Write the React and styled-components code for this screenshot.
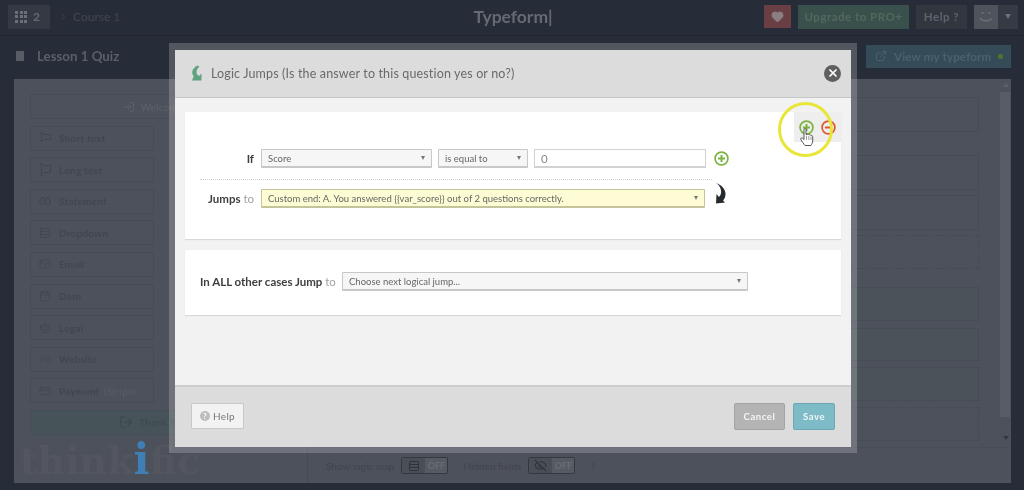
import React from "react";
import styled, { createGlobalStyle } from "styled-components";
import {
  ChevronRight,
  Heart,
  ExternalLink,
  Rows3,
  Mail,
  Calendar,
  Scale,
  Link2,
  CreditCard,
  LogOut,
  LogIn,
  EyeOff,
  X,
} from "lucide-react";

const GlobalStyle = createGlobalStyle`
  html, body {
    margin: 0;
    padding: 0;
    background: #262c38;
  }
  * {
    box-sizing: border-box;
  }
`;

const Page = styled.div`
  position: relative;
  width: 1024px;
  height: 490px;
  overflow: hidden;
  background: #262c38;
  font-family: Lato, "Liberation Sans", sans-serif;
  color: #5f636c;
  filter: blur(0.35px);
`;

const TopBar = styled.header`
  display: grid;
  grid-template-columns: 1fr auto 1fr;
  align-items: center;
  height: 36px;
  padding: 0 6px 2px 8px;
  border-bottom: 1px solid #22272f;
`;

const TopLeft = styled.div`
  display: flex;
  align-items: center;
`;

const AppsButton = styled.div`
  display: flex;
  align-items: center;
  gap: 6px;
  width: 42px;
  height: 24px;
  padding-left: 7px;
  background: #343944;
  color: #666a72;
  font-size: 12px;
  font-weight: 700;
`;

const Dots = styled.div`
  display: grid;
  grid-template-columns: repeat(3, 3px);
  gap: 1.5px;

  i {
    width: 3px;
    height: 3px;
    background: #6b6f77;
  }
`;

const Crumb = styled.span`
  display: flex;
  align-items: center;
  gap: 5px;
  margin-left: 9px;
  font-size: 12px;
  color: #424751;
`;

const Brand = styled.div`
  font-size: 17.5px;
  font-weight: 700;
  color: #656971;
`;

const TopRight = styled.div`
  display: flex;
  justify-content: flex-end;
  align-items: center;
  gap: 7px;
`;

const HeartButton = styled.div`
  display: flex;
  align-items: center;
  justify-content: center;
  width: 27px;
  height: 23px;
  background: #6a3f43;
  color: #8a7f82;
`;

const TopButton = styled.div`
  display: flex;
  align-items: center;
  justify-content: center;
  width: ${(p) => p.$width}px;
  height: 24px;
  background: ${(p) => p.$bg};
  color: ${(p) => p.$color};
  font-size: 11.5px;
  font-weight: 700;
  letter-spacing: 0.5px;
`;

const Avatar = styled.div`
  display: flex;
  width: 44px;
  height: 24px;
  background: #353a44;
`;

const AvatarFace = styled.div`
  display: flex;
  align-items: center;
  justify-content: center;
  width: 24px;
  background: #4f535c;
`;

const AvatarCaret = styled.div`
  flex: 1;
  display: flex;
  align-items: center;
  justify-content: center;

  &::after {
    content: "";
    border: 3.5px solid transparent;
    border-top: 5px solid #6d7178;
    border-bottom: 0;
  }
`;

const SubBar = styled.div`
  display: flex;
  align-items: center;
  height: 43px;
  padding: 0 13px 3px 16px;
`;

const BookMark = styled.div`
  width: 8px;
  height: 10px;
  background: #585c65;
  margin-right: 13px;
`;

const LessonTitle = styled.div`
  flex: 1;
  font-size: 13.3px;
  font-weight: 700;
  color: #5b5f68;
`;

const ViewButton = styled.div`
  display: flex;
  align-items: center;
  gap: 7px;
  width: 145px;
  height: 23px;
  padding-left: 9px;
  background: #354c58;
  color: #4b616d;
  font-size: 11.5px;
  font-weight: 700;
  letter-spacing: 0.2px;
`;

const LiveDot = styled.i`
  width: 5px;
  height: 5px;
  border-radius: 50%;
  background: #55752f;
`;

const Panel = styled.main`
  display: grid;
  grid-template-columns: 294px 1fr;
  grid-template-rows: 368px 36px;
  width: 997px;
  height: 404px;
  margin-left: 14px;
  background: #4d515b;
`;

const FieldList = styled.aside`
  display: flex;
  flex-direction: column;
  gap: 6.6px;
  padding: 15px 16px 0;
`;

const Welcome = styled.div`
  display: flex;
  align-items: center;
  justify-content: center;
  gap: 6px;
  height: 25px;
  margin-right: 16px;
  border: 1px solid #474b55;
  font-size: 10px;
  letter-spacing: 0.2px;
  color: #5e626a;
  white-space: nowrap;
`;

const FieldItem = styled.div`
  display: flex;
  align-items: center;
  gap: 8px;
  width: 124px;
  height: 25px;
  padding-left: 8px;
  border: 1px solid #474b54;
  font-size: 10px;
  font-weight: 700;
  letter-spacing: 0.2px;
  color: #42464f;

  svg {
    color: #41454c;
    flex: none;
  }

  em {
    font-style: normal;
    font-weight: 400;
    color: #585c65;
    margin-left: -4px;
  }
`;

const ThankYou = styled(Welcome)`
  background: #465359;
  border-color: #445056;
  color: #42464f;
`;

const QuestionPane = styled.section`
  display: grid;
  grid-template-columns: 1fr 11px;
`;

const QuestionList = styled.div`
  display: flex;
  flex-direction: column;
  padding: 18px 21px 0 14px;
`;

const QuestionBox = styled.div`
  height: ${(p) => p.$height}px;
  margin-top: ${(p) => p.$gap}px;
  border: 1px ${(p) => (p.$dashed ? "dashed #464a53" : "solid #474b54")};
  background: ${(p) => (p.$teal ? "#4a535a" : "transparent")};
`;

const ScrollBar = styled.div`
  display: flex;
  flex-direction: column;
  justify-content: space-between;
  align-items: center;
  padding: 4px 0 7px;
  background: linear-gradient(#585c65, #585c65) no-repeat 0 13px / 10px 325px;

  &::before,
  &::after {
    content: "";
    border: 3px solid transparent;
  }
  &::before {
    border-bottom: 4px solid #5c6069;
    border-top: 0;
  }
  &::after {
    border-top: 4px solid #33373f;
    border-bottom: 0;
  }
`;

const LogoCell = styled.div`
  position: relative;
  border-right: 1px solid #464a53;
`;

const Logo = styled.div`
  position: absolute;
  left: 6px;
  top: -9px;
  font-family: "DejaVu Serif", serif;
  font-weight: 700;
  font-size: 38px;
  line-height: 44px;
  color: #53565e;

  span {
    font-size: 42px;
    color: #3f7fb3;
  }
`;

const OptionsBar = styled.div`
  display: flex;
  align-items: center;
  padding-left: 18px;
  border-top: 1px solid #484c55;
  font-size: 10px;
  color: #41454d;
`;

const Toggle = styled.div`
  display: flex;
  width: 47px;
  height: 17px;
  margin: 0 15px 0 7px;
  border: 1px solid #34383f;
  border-radius: 2px;
  background: #565a62;
`;

const ToggleIcon = styled.div`
  display: flex;
  align-items: center;
  justify-content: center;
  width: 23px;
  background: #4a4e57;
  color: #2f333a;
`;

const ToggleLabel = styled.div`
  flex: 1;
  text-align: center;
  line-height: 15px;
  font-size: 9px;
  font-weight: 700;
  color: #6a6d73;
`;

const ModalFrame = styled.div`
  position: absolute;
  left: 169px;
  top: 43px;
  width: 688px;
  height: 410px;
  padding: 7px 6px 6px;
  background: rgba(255, 255, 255, 0.2);
`;

const Modal = styled.div`
  display: grid;
  grid-template-rows: 48px 287px 62px;
  height: 100%;
  background: #f2f2f2;
  color: #666;
`;

const ModalHeader = styled.div`
  display: flex;
  align-items: center;
  padding: 0 10px 1px 16px;
  background: #dcdcdc;
  border-bottom: 1px solid #c6c6c6;
`;

const ModalTitle = styled.h1`
  flex: 1;
  margin: 0 0 0 9px;
  font-size: 12.5px;
  font-weight: 400;
  letter-spacing: 0.15px;
  color: #6a6a6a;
`;

const CloseButton = styled.div`
  display: flex;
  align-items: center;
  justify-content: center;
  width: 17px;
  height: 17px;
  border-radius: 50%;
  background: #5f5f5f;
  color: #fff;
`;

const ModalBody = styled.div`
  display: flex;
  flex-direction: column;
  gap: 11px;
  padding: 14px 10px 0;
`;

const Card = styled.div`
  position: relative;
  height: ${(p) => p.$height}px;
  padding: ${(p) => p.$pad}px 0 0 15px;
  background: #fff;
  box-shadow: 0 1px 1px #d8d8d8;
`;

const CardTab = styled.div`
  position: absolute;
  top: 0;
  right: 0;
  display: flex;
  gap: 7px;
  width: 47px;
  height: 30px;
  padding: 8px 0 0 5px;
  background: #eeeeee;
`;

const Row = styled.div`
  display: flex;
  align-items: center;
  gap: 6px;
`;

const Label = styled.div`
  width: ${(p) => p.$width || 54}px;
  margin-right: 1px;
  text-align: ${(p) => (p.$left ? "left" : "right")};
  font-size: 11.5px;
  font-weight: 700;
  color: #3f3f3f;
  white-space: nowrap;

  span {
    font-weight: 400;
    color: #a0a0a0;
  }
`;

const Select = styled.div`
  display: flex;
  align-items: center;
  justify-content: space-between;
  width: ${(p) => p.$width}px;
  height: 19px;
  padding: 0 6px;
  background: ${(p) => (p.$warn ? "#fdfcd4" : "#f6f6f6")};
  border: 1px solid ${(p) => (p.$warn ? "#c4c39a" : "#c8c8c8")};
  border-bottom-width: 2px;
  border-radius: 1px;
  font-size: 9.5px;
  color: #666;
  white-space: nowrap;

  &::after {
    content: "";
    border: 2.5px solid transparent;
    border-top: 4px solid #777;
    border-bottom: 0;
  }
`;

const ValueInput = styled.input`
  width: 172px;
  height: 19px;
  padding: 0 6px;
  background: #fff;
  border: 1px solid #d2d2d2;
  border-bottom-width: 2px;
  outline: none;
  font: 400 11.5px Lato, "Liberation Sans", sans-serif;
  color: #888;
`;

const Divider = styled.div`
  width: 512px;
  margin: 11px 0 9px;
  border-top: 1px dotted #d0d0d0;
`;

const PlusSlot = styled.div`
  display: flex;
  margin-left: 2px;
`;

const ArrowSlot = styled.svg`
  flex: none;
  margin: -15px 0 -5px 4px;
`;

const ModalFooter = styled.div`
  display: flex;
  align-items: flex-start;
  justify-content: space-between;
  padding: 16px 16px 0;
  background: #dcdcdc;
  border-top: 2px solid #cdcdcd;
`;

const HelpButton = styled.div`
  display: flex;
  align-items: center;
  justify-content: center;
  gap: 3px;
  width: 53px;
  height: 26px;
  background: #f2f2f2;
  border: 1px solid #c8c8c8;
  border-radius: 1px;
  font-size: 10px;
  letter-spacing: 0.3px;
  color: #777;
`;

const HelpDot = styled.i`
  display: flex;
  align-items: center;
  justify-content: center;
  width: 10px;
  height: 10px;
  border-radius: 50%;
  background: #bdbdbd;
  color: #fff;
  font-size: 8px;
  font-style: normal;
  font-weight: 700;
`;

const FooterActions = styled.div`
  display: flex;
  gap: 8px;
`;

const ActionButton = styled.div`
  display: flex;
  align-items: center;
  justify-content: center;
  width: ${(p) => p.$width}px;
  height: 27px;
  background: ${(p) => p.$bg};
  border: 1px solid ${(p) => p.$border};
  border-radius: 2px;
  color: #f1f5f5;
  font-size: 9.5px;
  font-weight: 700;
  letter-spacing: 0.6px;
`;

const Ring = styled.div`
  position: absolute;
  left: 778px;
  top: 102px;
  width: 55px;
  height: 55px;
  border: 3px solid #e9e63a;
  border-radius: 50%;
  pointer-events: none;
`;

const Cursor = styled.svg`
  position: absolute;
  left: 800px;
  top: 128px;
`;

const RoundIcon = ({ color, plus }) => (
  <svg width="15" height="15" viewBox="0 0 15 15" fill="none">
    <circle cx="7.5" cy="7.5" r="6.4" stroke={color} strokeWidth="1.7" />
    <path d={plus ? "M7.5 4v7M4 7.5h7" : "M4 7.5h7"} stroke={color} strokeWidth="2" />
  </svg>
);

const LogicGlyph = () => (
  <svg width="11" height="16" viewBox="0 0 11 16">
    <path
      d="M6.5 0.5C3.5 2 1.2 4.500 1.200 7.500c0 1.800.8 3 1.500 3.800L1 15.500h9.500V8.500L8 11C6.500 10 5.200 8.800 5.500 6.500 5.700 4.500 7 3 8.500 1.800z"
      fill="#5fa27f"
    />
  </svg>
);

const CurvedArrow = () => (
  <ArrowSlot width="12" height="21" viewBox="0 0 12 21">
    <path
      d="M1 0C6 1.500 10.500 6 10.500 11 10.500 14 9.500 16 8 17.500L10 19.500 1 20.500 1.500 11 4 14C5.500 12.500 6.500 10 6 7.500 5.500 4 3.500 1.500 1 0Z"
      fill="#26292e"
    />
  </ArrowSlot>
);

const HandCursor = () => (
  <Cursor width="14" height="19" viewBox="0 0 14 19">
    <path
      d="M4 1.500c0-1.300 2-1.300 2 0v5l1 .1c.8-.6 1.700-.4 2 .3.800-.5 1.700-.1 1.900.6 1-.3 1.800.3 1.800 1.300v4c0 2-.9 3.200-1.700 4.700H5C3.800 16 1.800 13.500.8 11.500c-.6-1.200.7-2.200 1.700-1.300L4 11.500z"
      fill="#fff"
      stroke="#555"
      strokeWidth="1"
    />
    <path d="M6.500 8v4M8.800 8v4M11 8.500v3.500" stroke="#777" strokeWidth=".7" />
  </Cursor>
);

const FaceIcon = () => (
  <svg width="16" height="14" viewBox="0 0 16 14" fill="none">
    <circle cx="4.500" cy="3" r="1.100" fill="#6c7078" />
    <circle cx="11.500" cy="3" r="1.100" fill="#6c7078" />
    <path d="M2 8c1.500 3.500 10.500 3.500 12 0" stroke="#6c7078" strokeWidth="1.500" />
  </svg>
);

// cursor bar next to a box, the short and long text field glyphs
const TextFieldIcon = ({ tall }) => (
  <svg width="12" height="14" viewBox="0 0 12 14" fill="none" stroke="currentColor" strokeWidth="1">
    <path d={tall ? "M1 1h3M2.500 1v11M1 12h3" : "M1 2h3M2.500 2v8M1 10h3"} />
    <path d={tall ? "M4 2.500h7.500v7H4" : "M4 3.500h7.500v5H4"} />
  </svg>
);

const StatementIcon = () => (
  <svg width="12" height="12" viewBox="0 0 12 12" fill="none" stroke="currentColor" strokeWidth="1">
    <rect x="1" y="3" width="4" height="6.500" rx="1.500" />
    <rect x="7" y="3" width="4" height="6.500" rx="1.500" />
    <path d="M3.500 3c0-1 .5-1.500 1.500-1.500M9.500 3c0-1 .5-1.500 1.500-1.500" />
  </svg>
);

const ShortIcon = () => <TextFieldIcon />;
const LongIcon = () => <TextFieldIcon tall />;

const fields = [
  { name: "Short text", Icon: ShortIcon },
  { name: "Long text", Icon: LongIcon },
  { name: "Statement", Icon: StatementIcon },
  { name: "Dropdown", Icon: Rows3 },
  { name: "Email", Icon: Mail },
  { name: "Date", Icon: Calendar },
  { name: "Legal", Icon: Scale },
  { name: "Website", Icon: Link2 },
  { name: "Payment", note: "(Stripe)", Icon: CreditCard },
];

const questions = [
  { height: 35, gap: 0 },
  { height: 35, gap: 23 },
  { height: 35, gap: 5 },
  { height: 34, gap: 5, dashed: true },
  { height: 34, gap: 18, teal: true },
  { height: 33, gap: 7, teal: true },
  { height: 34, gap: 6, teal: true },
  { height: 34, gap: 6, dashed: true },
];

const App = () => (
  <Page>
    <GlobalStyle />
    <TopBar>
      <TopLeft>
        <AppsButton>
          <Dots>
            {Array.from({ length: 9 }, (_, i) => (
              <i key={i} />
            ))}
          </Dots>
          2
        </AppsButton>
        <Crumb>
          <ChevronRight size={9} />
          Course 1
        </Crumb>
      </TopLeft>
      <Brand>Typeform|</Brand>
      <TopRight>
        <HeartButton>
          <Heart size={13} fill="currentColor" />
        </HeartButton>
        <TopButton $width={111} $bg="#3a504c" $color="#52685c">
          Upgrade to PRO+
        </TopButton>
        <TopButton $width={51} $bg="#31363f" $color="#5f636c">
          Help ?
        </TopButton>
        <Avatar>
          <AvatarFace>
            <FaceIcon />
          </AvatarFace>
          <AvatarCaret />
        </Avatar>
      </TopRight>
    </TopBar>

    <SubBar>
      <BookMark />
      <LessonTitle>Lesson 1 Quiz</LessonTitle>
      <ViewButton>
        <ExternalLink size={12} />
        View my typeform
        <LiveDot />
      </ViewButton>
    </SubBar>

    <Panel>
      <FieldList>
        <Welcome>
          <LogIn size={12} />
          Welcome
        </Welcome>
        {fields.map(({ name, note, Icon }) => (
          <FieldItem key={name}>
            <Icon size={12} strokeWidth={1.4} />
            {name}
            {note && <em>{note}</em>}
          </FieldItem>
        ))}
        <ThankYou>
          <LogOut size={14} />
          Thank You
        </ThankYou>
      </FieldList>
      <QuestionPane>
        <QuestionList>
          {questions.map((q, i) => (
            <QuestionBox key={i} $height={q.height} $gap={q.gap} $dashed={q.dashed} $teal={q.teal} />
          ))}
        </QuestionList>
        <ScrollBar />
      </QuestionPane>
      <LogoCell>
        <Logo>
          think<span>i</span>fic
        </Logo>
      </LogoCell>
      <OptionsBar>
        Show logic map
        <Toggle>
          <ToggleIcon>
            <Rows3 size={12} />
          </ToggleIcon>
          <ToggleLabel>OFF</ToggleLabel>
        </Toggle>
        Hidden fields
        <Toggle>
          <ToggleIcon>
            <EyeOff size={13} />
          </ToggleIcon>
          <ToggleLabel>OFF</ToggleLabel>
        </Toggle>
        ?
      </OptionsBar>
    </Panel>

    <ModalFrame>
      <Modal>
        <ModalHeader>
          <LogicGlyph />
          <ModalTitle>Logic Jumps (Is the answer to this question yes or no?)</ModalTitle>
          <CloseButton>
            <X size={12} strokeWidth={3.5} />
          </CloseButton>
        </ModalHeader>

        <ModalBody>
          <Card $height={127} $pad={37}>
            <CardTab>
              <RoundIcon color="#7db343" plus />
              <RoundIcon color="#e0552f" />
            </CardTab>
            <Row>
              <Label>If</Label>
              <Select $width={171}>Score</Select>
              <Select $width={90}>is equal to</Select>
              <ValueInput value="0" readOnly />
              <PlusSlot>
                <RoundIcon color="#7db343" plus />
              </PlusSlot>
            </Row>
            <Divider />
            <Row>
              <Label>
                Jumps <span>to</span>
              </Label>
              <Select $width={444} $warn>
                Custom end: A. You answered {"{{var_score}}"} out of 2 questions correctly.
              </Select>
              <CurvedArrow />
            </Row>
          </Card>
          <Card $height={65} $pad={22}>
            <Row>
              <Label $width={135} $left>
                In ALL other cases Jump <span>to</span>
              </Label>
              <Select $width={406}>Choose next logical jump...</Select>
            </Row>
          </Card>
        </ModalBody>

        <ModalFooter>
          <HelpButton>
            <HelpDot>?</HelpDot>
            Help
          </HelpButton>
          <FooterActions>
            <ActionButton $width={51} $bg="#b4b4b4" $border="#a3a3a3">
              Cancel
            </ActionButton>
            <ActionButton $width={42} $bg="#7dbcc6" $border="#6aa8b3">
              Save
            </ActionButton>
          </FooterActions>
        </ModalFooter>
      </Modal>
    </ModalFrame>

    <Ring />
    <HandCursor />
  </Page>
);

export default App;
